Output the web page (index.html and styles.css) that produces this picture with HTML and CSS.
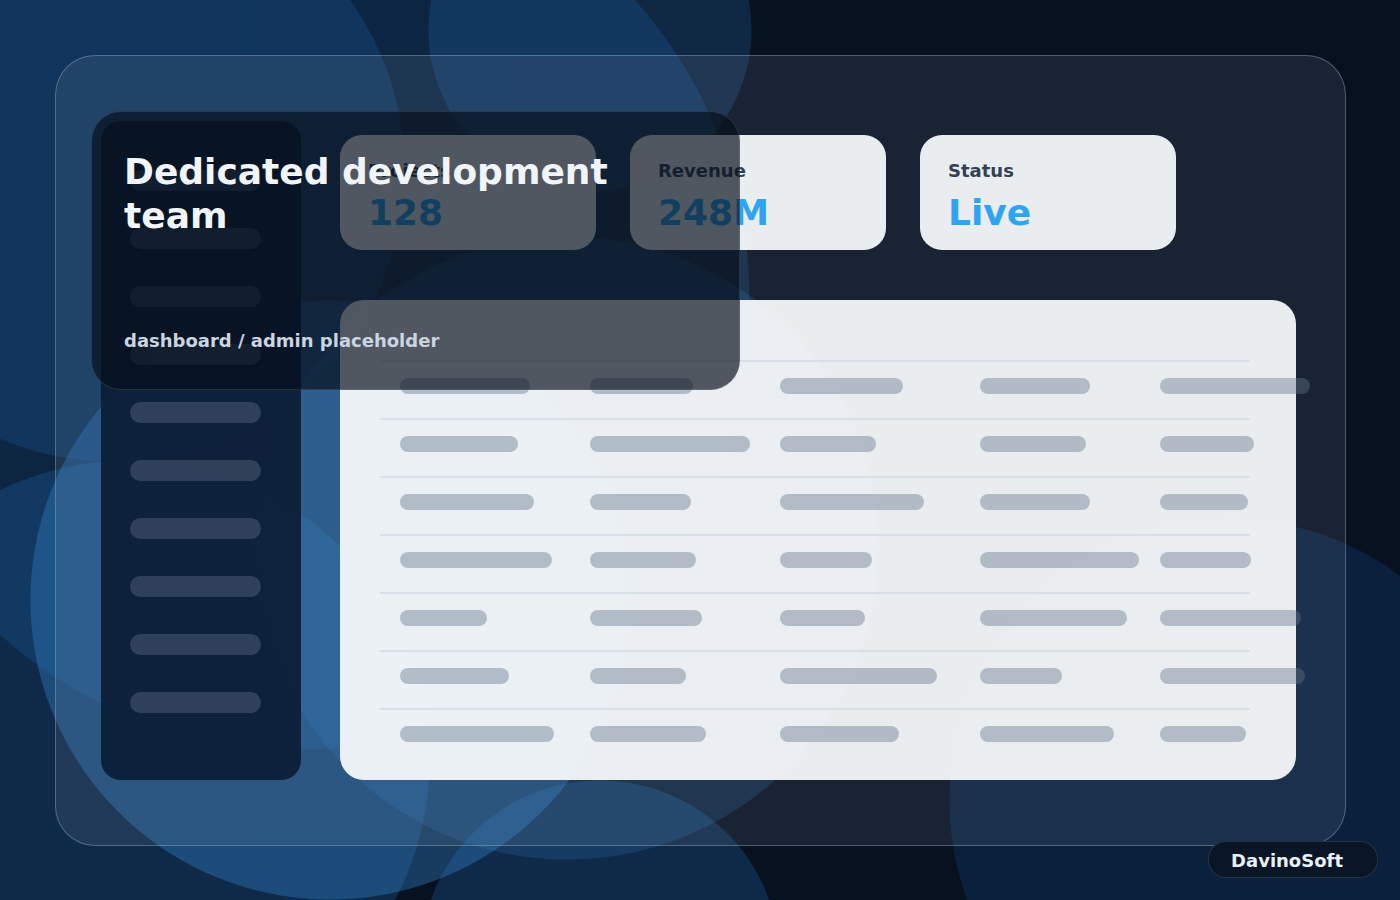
FILE: index.html
```html
<!DOCTYPE html>
<html lang="en">
<head>
    <meta charset="UTF-8">
    <meta name="viewport" content="width=device-width, initial-scale=1.0">
    <title>DavinoSoft - Dedicated development team</title>
    <link rel="stylesheet" href="styles.css">
</head>
<body>
    <div class="frame">
        <aside class="sidebar">
            <span class="side-bar"></span>
            <span class="side-bar"></span>
            <span class="side-bar"></span>
            <span class="side-bar"></span>
            <span class="side-bar"></span>
            <span class="side-bar"></span>
            <span class="side-bar"></span>
            <span class="side-bar"></span>
            <span class="side-bar"></span>
            <span class="side-bar"></span>
        </aside>

        <main class="main">
            <div class="stats">
                <div class="stat-card">
                    <div class="stat-label">Projects</div>
                    <div class="stat-value">128</div>
                </div>
                <div class="stat-card">
                    <div class="stat-label">Revenue</div>
                    <div class="stat-value">248M</div>
                </div>
                <div class="stat-card">
                    <div class="stat-label">Status</div>
                    <div class="stat-value">Live</div>
                </div>
            </div>

            <div class="table-card">
                <div class="table">
                    <div class="row">
                        <span class="pill" style="width:130px"></span>
                        <span class="pill" style="width:103px"></span>
                        <span class="pill" style="width:123px"></span>
                        <span class="pill" style="width:110px"></span>
                        <span class="pill" style="width:150px"></span>
                    </div>
                    <div class="row">
                        <span class="pill" style="width:118px"></span>
                        <span class="pill" style="width:160px"></span>
                        <span class="pill" style="width:96px"></span>
                        <span class="pill" style="width:106px"></span>
                        <span class="pill" style="width:94px"></span>
                    </div>
                    <div class="row">
                        <span class="pill" style="width:134px"></span>
                        <span class="pill" style="width:101px"></span>
                        <span class="pill" style="width:144px"></span>
                        <span class="pill" style="width:110px"></span>
                        <span class="pill" style="width:88px"></span>
                    </div>
                    <div class="row">
                        <span class="pill" style="width:152px"></span>
                        <span class="pill" style="width:106px"></span>
                        <span class="pill" style="width:92px"></span>
                        <span class="pill" style="width:159px"></span>
                        <span class="pill" style="width:91px"></span>
                    </div>
                    <div class="row">
                        <span class="pill" style="width:87px"></span>
                        <span class="pill" style="width:112px"></span>
                        <span class="pill" style="width:85px"></span>
                        <span class="pill" style="width:147px"></span>
                        <span class="pill" style="width:141px"></span>
                    </div>
                    <div class="row">
                        <span class="pill" style="width:109px"></span>
                        <span class="pill" style="width:96px"></span>
                        <span class="pill" style="width:157px"></span>
                        <span class="pill" style="width:82px"></span>
                        <span class="pill" style="width:145px"></span>
                    </div>
                    <div class="row">
                        <span class="pill" style="width:154px"></span>
                        <span class="pill" style="width:116px"></span>
                        <span class="pill" style="width:119px"></span>
                        <span class="pill" style="width:134px"></span>
                        <span class="pill" style="width:86px"></span>
                    </div>
                </div>
            </div>
        </main>

        <header class="hero">
            <h1>Dedicated development team</h1>
            <p>dashboard / admin placeholder</p>
        </header>
    </div>

    <div class="brand">DavinoSoft</div>
</body>
</html>
```

FILE: styles.css
```css
body {
    margin: 0;
    width: 1400px;
    height: 900px;
    padding: 55px;
    box-sizing: border-box;
    overflow: hidden;
    position: relative;
    font-family: 'DejaVu Sans', 'Liberation Sans', sans-serif;
    background-color: #08111f;
    /* soft blue blobs */
    background-image:
        radial-gradient(circle 162px at 590px 30px, rgba(40, 120, 200, 0.22) 161px, transparent 162px),
        radial-gradient(circle 292px at 113px 170px, rgba(30, 100, 170, 0.25) 291px, transparent 292px),
        radial-gradient(circle 312px at 567px 548px, rgba(50, 130, 200, 0.2) 311px, transparent 312px),
        radial-gradient(circle 300px at 330px 600px, rgba(50, 130, 200, 0.38) 299px, transparent 300px),
        radial-gradient(circle 300px at 130px 760px, rgba(30, 100, 170, 0.3) 299px, transparent 300px),
        radial-gradient(circle 180px at 600px 960px, rgba(30, 100, 170, 0.3) 179px, transparent 180px),
        radial-gradient(circle 282px at 1231px 801px, rgba(20, 110, 210, 0.17) 281px, transparent 282px),
        radial-gradient(circle 450px at 300px 300px, rgba(20, 80, 140, 0.32) 449px, transparent 450px);
}

.frame {
    position: relative;
    width: 1291px;
    height: 791px;
    box-sizing: border-box;
    padding: 65px 49px 65px 45px;
    display: grid;
    grid-template-columns: 200px minmax(0, 1fr);
    column-gap: 39px;
    border: 1px solid rgba(148, 163, 184, 0.45);
    border-radius: 40px;
    background: rgba(148, 163, 184, 0.13);
}

.sidebar {
    display: flex;
    flex-direction: column;
    gap: 37px;
    padding: 49px 29px 0;
    background: rgba(12, 28, 52, 0.92);
    border-radius: 20px;
}
.side-bar {
    display: block;
    width: 131px;
    height: 21px;
    border-radius: 11px;
    background: rgba(148, 163, 184, 0.25);
}

.main {
    display: flex;
    flex-direction: column;
    gap: 50px;
    padding-top: 14px;
    min-width: 0;
}
.stats {
    display: flex;
    gap: 34px;
}
.stat-card {
    width: 256px;
    height: 115px;
    box-sizing: border-box;
    padding: 25px 28px 0;
    border-radius: 22px;
    background: rgba(248, 250, 252, 0.94);
}
.stat-label {
    font-size: 18px;
    font-weight: bold;
    color: #334155;
    margin-bottom: 11px;
}
.stat-value {
    font-size: 36px;
    font-weight: bold;
    line-height: 1.15;
    color: #2ea4f3;
}

.table-card {
    flex: 1;
    padding: 60px 46px 0 40px;
    border-radius: 24px;
    background: rgba(248, 250, 252, 0.94);
}
.row {
    display: grid;
    grid-template-columns: 190px 190px 200px 180px minmax(0, 1fr);
    align-items: start;
    padding: 16px 0 24px 20px;
    border-top: 2px solid rgba(203, 213, 225, 0.6);
}
.pill {
    display: block;
    height: 16px;
    border-radius: 8px;
    background: rgba(100, 116, 139, 0.42);
}

.hero {
    position: absolute;
    left: 35px;
    top: 55px;
    width: 649px;
    height: 279px;
    box-sizing: border-box;
    padding: 38px 34px 38px 32px;
    display: flex;
    flex-direction: column;
    justify-content: space-between;
    border: 1px solid rgba(148, 163, 184, 0.2);
    border-radius: 30px;
    background: rgba(6, 15, 27, 0.68);
}
.hero h1 {
    margin: 0;
    font-size: 36px;
    line-height: 44px;
    color: #f1f5f9;
}
.hero p {
    margin: 0;
    font-size: 18px;
    font-weight: bold;
    line-height: 21px;
    color: #cbd5e1;
}

.brand {
    position: absolute;
    right: 22px;
    bottom: 22px;
    height: 31px;
    padding: 4px 34px 0 22px;
    line-height: 30px;
    border: 1px solid rgba(148, 163, 184, 0.2);
    border-radius: 18px;
    background: #0a1626;
    color: #e8f0fa;
    font-size: 18px;
    font-weight: bold;
}
```
